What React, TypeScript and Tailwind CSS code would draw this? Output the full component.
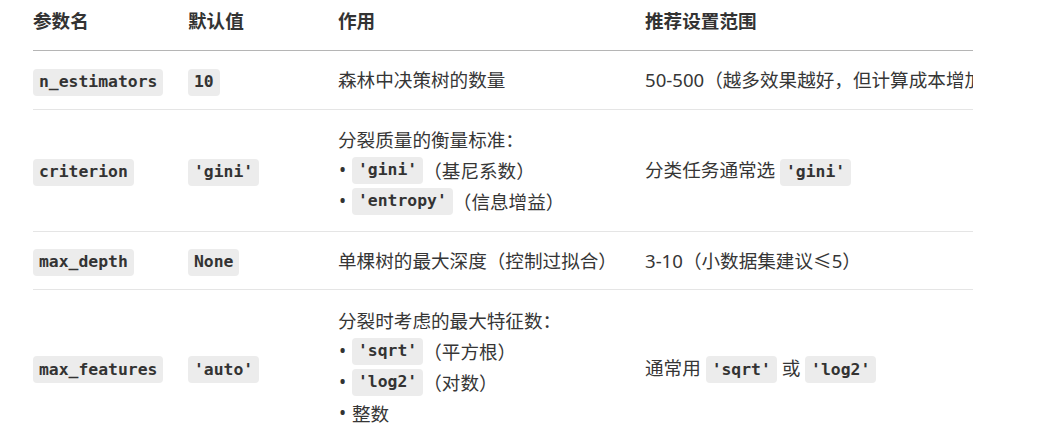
import React from 'react';

const Code = ({ children }: { children: React.ReactNode }) => (
  <code className="inline-flex h-[27px] items-center rounded-[4px] bg-[#ececec] px-[6px] align-middle font-['DejaVu_Sans_Mono',monospace] text-[16.4px] leading-none font-bold text-[#333]">
    {children}
  </code>
);

const Bullet = ({ children }: { children: React.ReactNode }) => (
  <div className="flex items-center h-[31px]">
    <span className="w-[14px] pl-[1px] text-[19px] leading-none text-[#333]">•</span>
    <span className="flex items-center">{children}</span>
  </div>
);

const rows = [
  {
    name: 'n_estimators',
    def: '10',
    use: <span>森林中决策树的数量</span>,
    range: <span>50-500（越多效果越好，但计算成本增加）</span>,
  },
  {
    name: 'criterion',
    def: "'gini'",
    use: (
      <div className="my-[1px]">
        <div className="h-[31px] flex items-center">分裂质量的衡量标准：</div>
        <Bullet>
          <Code>'gini'</Code>
          <span>（基尼系数）</span>
        </Bullet>
        <Bullet>
          <Code>'entropy'</Code>
          <span>（信息增益）</span>
        </Bullet>
      </div>
    ),
    range: (
      <span>
        分类任务通常选 <Code>'gini'</Code>
      </span>
    ),
  },
  {
    name: 'max_depth',
    def: 'None',
    use: <span>单棵树的最大深度（控制过拟合）</span>,
    range: <span>3-10（小数据集建议≤5）</span>,
  },
  {
    name: 'max_features',
    def: "'auto'",
    use: (
      <div className="mt-[2px] mb-[3px]">
        <div className="h-[31px] flex items-center">分裂时考虑的最大特征数：</div>
        <Bullet>
          <Code>'sqrt'</Code>
          <span>（平方根）</span>
        </Bullet>
        <Bullet>
          <Code>'log2'</Code>
          <span>（对数）</span>
        </Bullet>
        <Bullet>整数</Bullet>
      </div>
    ),
    range: (
      <span>
        通常用 <Code>'sqrt'</Code> 或 <Code>'log2'</Code>
      </span>
    ),
  },
];

export default function App() {
  return (
    <div className="w-[1057px] h-[443px] bg-white overflow-hidden font-['Noto_Sans','Noto_Sans_CJK_SC',sans-serif] text-[18.6px] text-[#363636]">
      <div className="ml-[33px] w-[940px] overflow-hidden">
        <table className="w-[1150px] table-fixed border-collapse">
          <colgroup>
            <col className="w-[155px]" />
            <col className="w-[150px]" />
            <col className="w-[307px]" />
            <col />
          </colgroup>
          <thead>
            <tr className="border-b border-[#b5b5b5] text-left font-bold text-[#333]">
              <th className="pt-[6px] pb-[14px] leading-[30px]">参数名</th>
              <th className="pt-[6px] pb-[14px] leading-[30px]">默认值</th>
              <th className="pt-[6px] pb-[14px] leading-[30px]">作用</th>
              <th className="pt-[6px] pb-[14px] leading-[30px]">推荐设置范围</th>
            </tr>
          </thead>
          <tbody>
            {rows.map((r) => (
              <tr key={r.name} className="border-b border-[#e5e5e5] align-middle">
                <td className="py-[13px] leading-[31px]">
                  <Code>{r.name}</Code>
                </td>
                <td className="py-[13px] leading-[31px]">
                  <Code>{r.def}</Code>
                </td>
                <td className="py-[13px] leading-[31px]">{r.use}</td>
                <td className="py-[13px] leading-[31px] whitespace-nowrap">{r.range}</td>
              </tr>
            ))}
          </tbody>
        </table>
      </div>
    </div>
  );
}
